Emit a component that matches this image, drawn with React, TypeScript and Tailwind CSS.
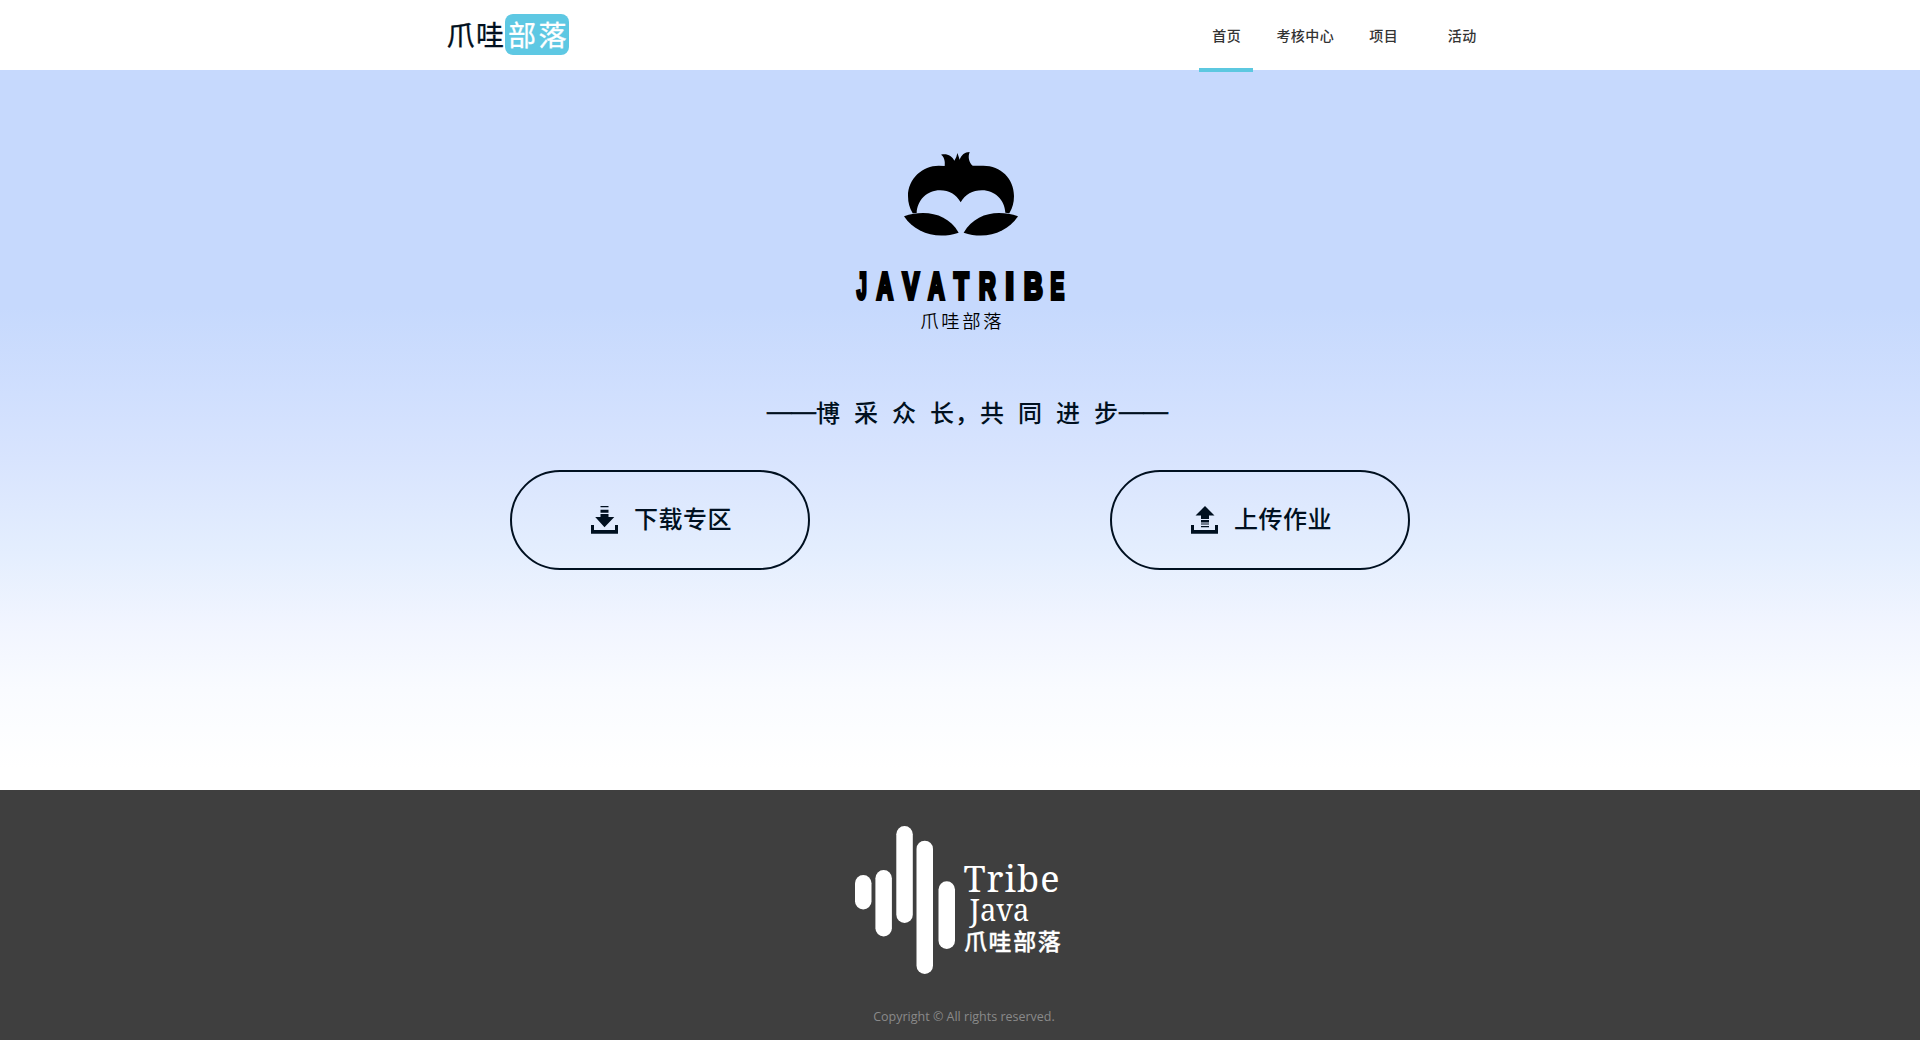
const SANS = "font-['Noto_Sans_CJK_SC',sans-serif]";

const navItems = ["首页", "考核中心", "项目", "活动"];

function BrandLogo() {
  return (
    <div className="ml-[2px] mt-[14px] flex h-[41px]">
      <svg className="overflow-visible" width="123" height="41" viewBox="0 0 123 41" fontFamily="'Noto Sans CJK SC', sans-serif" fontSize="28" fontWeight="400">
        <rect x="58" y="0" width="64" height="41" rx="8" fill="#5ec8e3" />
        <g fill="#001020" stroke="#001020" strokeWidth="0.300">
          <text x="-0.500" y="31.500">爪</text>
          <text x="29" y="31.500">哇</text>
        </g>
        <g fill="#fff" stroke="#fff" strokeWidth="0.300">
          <text x="61" y="31.500">部</text>
          <text x="91.500" y="31.500">落</text>
        </g>
      </svg>
    </div>
  );
}

function Header() {
  return (
    <header className="relative z-10 h-[70px] bg-white">
      <div className="mx-auto flex h-full w-[1030px] justify-between">
        <BrandLogo />
        <nav className="mr-[-26px] flex h-[72px] w-[314px]">
          {navItems.map((item, i) => (
            <a key={item} className="flex h-full flex-1 justify-center">
              <span
                className={
                  "flex h-full justify-center whitespace-nowrap pt-[25px] pl-px text-[14px] leading-[21px] font-medium tracking-[0.4px] text-[#333] " +
                  (i === 0 ? "w-[54px] border-b-4 border-b-[#5cc8e0]" : "")
                }
              >
                {item}
              </span>
            </a>
          ))}
        </nav>
      </div>
    </header>
  );
}

const wordmark = [
  { ch: "J", x: 50, w: 30 },
  { ch: "A", x: 110, w: 48.700 },
  { ch: "V", x: 188, w: 49 },
  { ch: "A", x: 265, w: 48.700 },
  { ch: "T", x: 342, w: 44 },
  { ch: "R", x: 417, w: 50.300 },
  { ch: "I", x: 496.500, w: 25 },
  { ch: "B", x: 552, w: 56 },
  { ch: "E", x: 631.500, w: 41 },
];

function OwlLogo() {
  return (
    <svg className="mt-[60px] shrink-0 overflow-visible" width="240" height="210" viewBox="0 0 720 630">
      <path d="M314 108 C316 92 312 80 303 74 C322 70 336 78 343 92 Q350 83 352 69 Q356 79 359 89 C364 75 374 66 389 66 C383 81 387 98 398 107 L430 107 C482 107 522 145 522 198 Q522 227 508 250 L496 248 C494 210 465 181 426 181 C397 181 376 193 362 217 C348 193 328 181 300 181 C261 181 232 210 230 249 L218 250 Q204 227 204 198 C204 145 248 107 296 107 Z" />
      <path d="M192 259 C254 238 322 249 356 308 C292 330 226 310 192 259 Z" />
      <path d="M534 259 C472 238 406 249 371 308 C434 330 500 310 534 259 Z" />
      <g fontFamily="'Liberation Sans', Arial, sans-serif" fontWeight="700" fontSize="110" stroke="#000" strokeWidth="12" strokeMiterlimit="2">
        {wordmark.map((g) => (
          <text key={g.x} x={g.x} y="507" textLength={g.w} lengthAdjust="spacingAndGlyphs">{g.ch}</text>
        ))}
      </g>
      <text x="241" y="595" fontFamily="'Noto Sans CJK SC', sans-serif" fontWeight="350" fontSize="55" letterSpacing="8">爪哇部落</text>
    </svg>
  );
}

function SloganDash() {
  return (
    <span className="mb-[3px] font-['Liberation_Sans',sans-serif] text-[24.5px] font-normal [-webkit-text-stroke:0.7px_#001020]">——</span>
  );
}

function Slogan() {
  return (
    <p className="mt-[54px] ml-[15px] flex h-[36px] items-center whitespace-pre text-[24px] leading-[36px] font-medium text-[#001020]">
      <SloganDash />
      <span className="mb-px tracking-[1px] [word-spacing:6.6px]">博 采 众 长，共 同 进 步</span>
      <SloganDash />
    </p>
  );
}

function TrayIcon({ up }: { up?: boolean }) {
  return (
    <svg width="27" height="28" viewBox="0 0 27 28" fill="#001020">
      <path d="M0 19h3v5h21v-5h3v8.700H0z" />
      {up ? (
        <path d="M14 0L23.500 9.500H18V13h-8V9.500H4.500zM10 14h8v2.500h-8zM10 17.500h8v1h-8zM10 20h8v1.300h-8z" />
      ) : (
        <path d="M9.500 0h8v1.300h-8zM9.500 3.700h8v3h-8zM9.500 8h8v3H23.300L13.500 21.300 4.200 11h5.300z" />
      )}
    </svg>
  );
}

function ActionButton({ label, up }: { label: string; up?: boolean }) {
  return (
    <button className="flex h-[100px] w-[300px] items-center rounded-full border-2 border-[#001020] pl-[79px] text-[#001020]">
      <TrayIcon up={up} />
      <span className="mb-[4px] ml-[16px] text-[24px] leading-[36px] font-medium tracking-[0.5px]">{label}</span>
    </button>
  );
}

const bars = [
  { x: 0, y: 49, h: 34.500 },
  { x: 20.400, y: 44, h: 66.500 },
  { x: 41.300, y: 0, h: 97 },
  { x: 61.500, y: 14.700, h: 133.300 },
  { x: 83.500, y: 55.300, h: 67.700 },
];

function Footer() {
  return (
    <footer className="flex h-[250px] flex-col items-center bg-[#3f3f3f]">
      <svg className="mt-[36px] shrink-0" width="210" height="150" viewBox="0 0 210 150" fill="#fff">
        {bars.map((b) => (
          <rect key={b.x} x={b.x} y={b.y} width="16.500" height={b.h} rx="8.250" />
        ))}
        <g fontFamily="'Noto Serif', Cambria, 'DejaVu Serif', serif">
          <text x="108.500" y="66" fontSize="36" textLength="96" lengthAdjust="spacing">Tribe</text>
          <text x="114.500" y="94.500" fontSize="30" textLength="60" lengthAdjust="spacingAndGlyphs">Java</text>
        </g>
        <text x="109" y="124" fontFamily="'Noto Sans CJK SC', sans-serif" fontWeight="500" fontSize="23" letterSpacing="1.600" stroke="#fff" strokeWidth="0.300" strokeLinejoin="round">爪哇部落</text>
      </svg>
      <p className="mt-[31px] ml-[8px] font-['Open_Sans',sans-serif] text-[12.5px] leading-[20px] text-[#8a8a8a]">
        Copyright © All rights reserved.
      </p>
    </footer>
  );
}

export default function App() {
  return (
    <div className={"h-[1040px] w-full overflow-hidden bg-white " + SANS}>
      <Header />
      <main className="flex h-[720px] flex-col items-center bg-[linear-gradient(180deg,#c6d9fd_0%,#c6d9fd_33%,#d0dffe_45%,#d8e4fe_54%,#e4eefe_67%,#f1f5ff_77%,#f9fbff_86%,#ffffff_97%)]">
        <OwlLogo />
        <Slogan />
        <div className="mt-[40px] flex gap-[300px]">
          <ActionButton label="下载专区" />
          <ActionButton label="上传作业" up />
        </div>
      </main>
      <Footer />
    </div>
  );
}
